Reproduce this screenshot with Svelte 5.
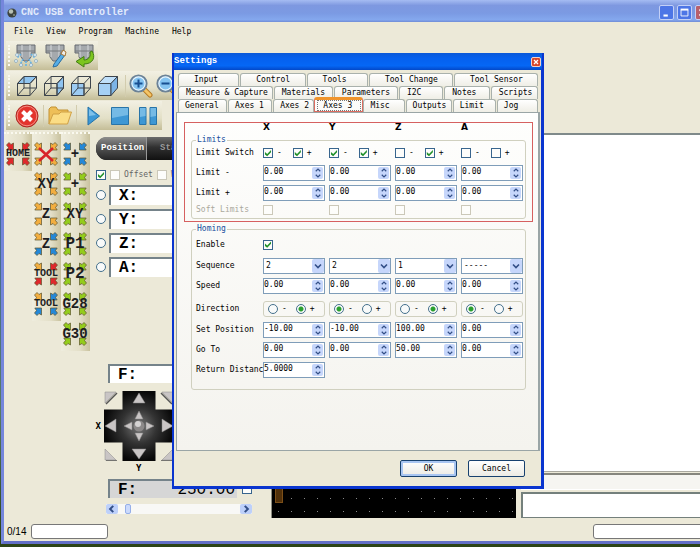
<script>
  const menus = ['File', 'View', 'Program', 'Machine', 'Help'];
  const tabRows = [
    { pad: 15, tabs: [['Input', 62], ['Control', 66], ['Tools', 62], ['Tool Change', 85], ['Tool Sensor', 85]] },
    { pad: 7, tabs: [['Measure & Capture', 96], ['Materials', 60], ['Parameters', 65], ['I2C', 45], ['Notes', 46], ['Scripts', 48]] },
    { pad: 6, tabs: [['General', 50], ['Axes 1', 45], ['Axes 2', 42], ['Axes 3', 48], ['Misc', 42], ['Outputs', 47], ['Limit', 44], ['Jog', 42]] }
  ];
  const axes = ['X', 'Y', 'Z', 'A'];
  const switches = [[true, true], [true, true], [false, true], [false, false]];
  const sequence = ['2', '2', '1', '-----'];
  const direction = ['+', '-', '+', '-'];
  const zeros = ['0.00', '0.00', '0.00', '0.00'];
  const setPosition = ['-10.00', '-10.00', '100.00', '0.00'];
  const goTo = ['0.00', '0.00', '50.00', '0.00'];

  const R = '#e0282c', O = '#f3ae3f', B = '#2488d8', G = '#93cc1c';
  const moves = [
    [{ t: 'HOME', s: 10, c: [R, R, R, R] }],
    [
      { t: '', cross: true, s: 10, c: [O, O, O, O] },
      { t: 'XY', s: 14, c: [O, O, O, O] },
      { t: 'Z', s: 14, c: [O, O, O, O] },
      { t: 'Z', s: 14, c: [O, B, B, B] },
      { t: 'TOOL', s: 10, c: [O, R, R, R] },
      { t: 'TOOL', s: 10, c: [O, B, B, B] }
    ],
    [
      { t: '+', s: 14, c: [B, B, B, B] },
      { t: '+', s: 14, c: [G, G, G, G] },
      { t: 'XY', s: 14, c: [G, G, G, G] },
      { t: 'P1', s: 16, c: [G, G, G, G] },
      { t: 'P2', s: 16, c: [G, G, G, G] },
      { t: 'G28', s: 14, c: [G, G, G, G] },
      { t: 'G30', s: 14, c: [G, G, G, G] }
    ]
  ];
  const corners = ['', 'translate(24 0) scale(-1 1)', 'translate(0 24) scale(1 -1)', 'translate(24 24) scale(-1 -1)'];
</script>

{#snippet spin(label, value)}
  <span class="spin">
    <input type="text" aria-label={label} {value} />
    <span class="arrows">
      <button aria-label="Increase"><svg viewBox="0 0 8 5"><path d="M1 4.200 4 1.300 7 4.200" /></svg></button>
      <button aria-label="Decrease"><svg viewBox="0 0 8 5"><path d="M1 .8 4 3.700 7 .8" /></svg></button>
    </span>
  </span>
{/snippet}

{#snippet spinRow(name, values)}
  <div class="row">
    <span class="name">{name}</span>
    {#each values as v, i}{@render spin(`${name} ${axes[i]}`, v)}{/each}
  </div>
{/snippet}

{#snippet cube(kind)}
  <button class="tool" aria-label="{kind} view">
    <svg width="20" height="20" viewBox="0 0 20 20" fill="none" stroke="#3d444c" stroke-width="1">
      {#if kind === 'Top'}<path d="M.5 7.5 7 .5H19.5L13 7.5Z" fill="#8fc4f0" />{/if}
      {#if kind === 'Side'}<path d="M13 7.5 19.5 .5V12L13 19.5Z" fill="#8fc4f0" />{/if}
      {#if kind === 'Front'}<path d="M.5 7.5H13V19.5H.5Z" fill="#9ccbf3" />{/if}
      {#if kind === 'Solid'}
        <path d="M.5 7.5H13V19.5H.5Z" fill="#a5d0f5" />
        <path d="M.5 7.5 7 .5H19.5L13 7.5Z" fill="#c0e0fa" />
        <path d="M13 7.5 19.5 .5V12L13 19.5Z" fill="#7cb4e6" />
      {:else}
        <path d="M.5 7.5H13V19.5H.5ZM7 .5H19.5V12H7ZM.5 7.5 7 .5M13 7.5 19.5 .5M.5 19.5 7 12M13 19.5 19.5 12" />
      {/if}
    </svg>
  </button>
{/snippet}

{#snippet lens(sign)}
  <button class="tool lens" aria-label="Zoom {sign}">
    <svg width="24" height="24" viewBox="0 0 24 24">
      <path d="m14.500 14.500 6.500 6.500" stroke="#b67a24" stroke-width="5" stroke-linecap="round" />
      <path d="m15 15 6 6" stroke="#f4c566" stroke-width="3" stroke-linecap="round" />
      <circle cx="9.500" cy="9.500" r="8" fill="#85c4f1" stroke="#6c8296" stroke-width="2.200" />
      <circle cx="9.500" cy="9.500" r="6.600" fill="none" stroke="#e6f4fd" stroke-width="1.200" />
      <path d={sign === 'in' ? 'M9.500 5.500v8M5.500 9.500h8' : 'M5.500 9.500h8'} stroke="#174f91" stroke-width="2" />
    </svg>
  </button>
{/snippet}

{#snippet spindle()}
  <path d="M3 1H21V9H17V13L14 17H10L7 13V9H3Z" fill="#a5a9ad" stroke="#666b70" />
  <path d="M8 1V13M16 1V13" stroke="#d7dadd" />
  <path d="M3 7H21" stroke="#74797d" />
{/snippet}

<div class="desktop">
  <main class="window">
    <header class="titlebar">
      <svg width="10" height="10" viewBox="0 0 10 10"><circle cx="5" cy="5" r="4.600" fill="#3d443f" /><circle cx="4" cy="3.500" r="2.200" fill="#b9c2b6" /><circle cx="7" cy="7" r="1" fill="#879084" /></svg>
      <h1>CNC USB Controller</h1>
      <button class="wbtn" aria-label="Minimize"><svg viewBox="0 0 15 15"><path d="M4 11H9" stroke="#fff" stroke-width="2.400" /></svg></button>
      <button class="wbtn" aria-label="Maximize"><svg viewBox="0 0 15 15"><path d="M3.500 4.500H11.500V11.500H3.500Z" fill="none" stroke="#fff" /><path d="M3 4H12" stroke="#fff" stroke-width="2" /></svg></button>
      <button class="wbtn close" aria-label="Close"><svg viewBox="0 0 15 15"><path d="M4 4 11 11M11 4 4 11" stroke="#fff" stroke-width="2" /></svg></button>
    </header>
    <nav class="menu">{#each menus as m}<button>{m}</button>{/each}</nav>

    <div class="toolbar">
      <button class="tool" aria-label="Mist">
        <svg width="24" height="24" viewBox="0 0 24 24">{@render spindle()}
          <path d="M7 10 3 14M17 10 21 14M9 15 6 21M15 15 18 21M12 17V23" stroke="#64b2e6" stroke-width="1.600" stroke-dasharray="2 1" />
          <g fill="#e4f3fc" stroke="#7297b1" stroke-width=".6"><circle cx="3" cy="11" r="1.500" /><circle cx="2" cy="17" r="1.500" /><circle cx="21" cy="11" r="1.500" /><circle cx="22" cy="17" r="1.500" /><circle cx="7" cy="21" r="1.500" /><circle cx="17" cy="21" r="1.500" /></g>
        </svg>
      </button>
      <button class="tool" aria-label="Probe">
        <svg width="24" height="24" viewBox="0 0 24 24">{@render spindle()}
          <path d="m11 20 8-11 3 2-8 11-4 1Z" fill="#55aee7" stroke="#2b6d9e" /><path d="m18 10 2-4 3 2-1 4Z" fill="#eee" stroke="#a7752f" />
        </svg>
      </button>
      <button class="tool" aria-label="Change tool">
        <svg width="24" height="24" viewBox="0 0 24 24">{@render spindle()}
          <path d="M20 7C24 13 21 20 12 20V23L4 17.500 12 12.500V16C17 16 19 12 18 8Z" fill="#7dc51f" stroke="#427c13" />
        </svg>
      </button>
    </div>
    <div class="toolbar cubes">
      {@render cube('Top')}{@render cube('Side')}{@render cube('Front')}{@render cube('Solid')}
      <i class="sep"></i>
      {@render lens('in')}{@render lens('out')}
    </div>
    <div class="toolbar run">
      <button class="tool" aria-label="Stop">
        <svg width="24" height="24" viewBox="0 0 24 24"><circle cx="12" cy="12" r="11" fill="#e3342d" stroke="#a92b25" /><circle cx="12" cy="12" r="9.800" fill="none" stroke="#f48d82" /><path d="m7.500 7.500 9 9m0-9-9 9" stroke="#fff" stroke-width="4" /></svg>
      </button>
      <i class="sep"></i>
      <button class="tool" aria-label="Open">
        <svg width="24" height="20" viewBox="0 0 24 20"><path d="M1 18V3L3 1H8L10 4H20V8" fill="#eebf58" stroke="#c39233" /><path d="M1 18 5 8 11 8 13 6H23.500L19.500 18Z" fill="#fbdd85" stroke="#d0a044" /></svg>
      </button>
      <i class="sep"></i>
      <button class="tool gap" aria-label="Start"><svg width="14" height="20" viewBox="0 0 14 20"><path d="M1 1 12.500 10 1 19Z" fill="#3c98d6" stroke="#2473a9" /><path d="M2 3 9 9 2 10Z" fill="#7fc1ea" /></svg></button>
      <button class="tool gap" aria-label="Halt"><svg width="18" height="18" viewBox="0 0 18 18"><path d="M.5 .5H17.500V17.500H.5Z" fill="#3d97d4" stroke="#2874a8" /><path d="M1 1H17V8L1 11Z" fill="#75bae5" /></svg></button>
      <button class="tool gap" aria-label="Pause"><svg width="18" height="18" viewBox="0 0 18 18"><path d="M.5 .5H7V17.500H.5ZM11 .5H17.500V17.500H11Z" fill="#3d97d4" stroke="#2874a8" /><path d="M1 1H6.500V9L1 10ZM11.500 1H17V9L11.500 10Z" fill="#75bae5" /></svg></button>
    </div>

    <div class="body">
      <div class="moves">
        {#each moves as col}
          <div class="movecol">
            {#each col as m}
              <button class="move" aria-label={m.t || 'Clear'}>
                <svg width="24" height="24" viewBox="0 0 24 24">
                  {#each m.c as fill, k}
                    <path d="M.5 3 3 .5 5 2.500 7.500 1V8H.8L2.500 5.500Z" {fill} stroke="#5d532c" stroke-width=".7" transform={corners[k]} />
                  {/each}
                  {#if m.cross}<path d="m5 6 14 13m0-13L5 19" stroke="#d8242a" stroke-width="2.600" />{/if}
                </svg>
                <span style="font-size:{m.s}px">{m.t}</span>
              </button>
            {/each}
          </div>
        {/each}
      </div>

      <section class="panel">
        <div class="pill"><button class="on">Position</button><button>Status</button></div>
        <div class="opts">
          <input type="checkbox" checked aria-label="Show position" />
          <label><input class="dim" type="checkbox" />Offset</label>
          <label><input class="dim" type="checkbox" />Work</label>
        </div>
        {#each ['X', 'Y', 'Z', 'A'] as a}
          <div class="axis"><input type="radio" name="axis" aria-label="Axis {a}" /><output>{a}:</output></div>
        {/each}
        <div class="lower">
          <output class="feed">F:</output>
          <div class="jog">
            <b>X</b>
            <svg width="70" height="70" viewBox="0 0 70 70">
              <defs><radialGradient id="pad"><stop offset="0" stop-color="#777" /><stop offset=".5" stop-color="#333" /><stop offset="1" stop-color="#080808" /></radialGradient></defs>
              <path d="M18.500 0H51.500V18.500H70V51.500H51.500V70H18.500V51.500H0V18.500H18.500Z" fill="url(#pad)" />
              <g fill="#c9c5c5" stroke="#8b8888" stroke-width=".5">
                <path d="M35 2 41 12H29ZM35 68 42 58H28ZM1 35 12 28V41ZM69 35 58 28V41Z" />
                <path d="M35 20 39 28H31ZM35 50 39 42H31ZM20 35 28 31V39ZM50 35 42 31V39Z" />
                <path d="M1 1H12L1 12ZM69 1H58L69 12ZM1 58V69H12ZM69 58V69H58Z" />
              </g>
              <path d="M2 13 13 2M57 2 68 13M2 70H13M57 70H69" stroke="#555" stroke-width="1.500" />
              <circle cx="35" cy="35" r="5.500" fill="#8c8989" /><circle cx="34" cy="33" r="3" fill="#d5d3d3" />
            </svg>
          </div>
          <b class="ylab">Y</b>
          <div class="rate"><output class="feed gray"><span>F:</span><span>250.00</span></output><input type="checkbox" aria-label="Override feed" /></div>
          <div class="slide">
            <button aria-label="Slower"><svg viewBox="0 0 8 8"><path d="M5 1.500 2.500 4 5 6.500" /></svg></button>
            <input type="range" min="0" max="100" value="4" aria-label="Feed rate" />
            <button aria-label="Faster"><svg viewBox="0 0 8 8"><path d="M3 1.500 5.500 4 3 6.500" /></svg></button>
          </div>
        </div>
      </section>

      <div class="canvas"><i></i></div>
      <section class="right"><div class="view"></div><div class="hbar"></div><div class="log"></div></section>
    </div>
    <footer class="status"><span>0/14</span><div class="box"></div><div class="box far"></div></footer>
  </main>

  <div class="dialog" role="dialog" aria-label="Settings">
    <header><h2>Settings</h2><button aria-label="Close settings"><svg viewBox="0 0 10 10"><path d="m2.500 2.500 5 5m0-5-5 5" stroke="#fff" stroke-width="1.600" /></svg></button></header>
    <div class="tabs" role="tablist">
      {#each tabRows as r}
        <div class="tabrow" style="grid-template-columns:{r.tabs.map(([, w]) => `minmax(0,${w}fr)`).join(' ')}">
          {#each r.tabs as [t]}
            <button role="tab" aria-selected={t === 'Axes 3'} class:sel={t === 'Axes 3'} style="padding-left:{r.pad}px"><span>{t}</span></button>
          {/each}
        </div>
      {/each}
    </div>
    <div class="page">
      <div class="marked">
        <div class="row heads"><span class="name"></span>{#each axes as a}<b>{a}</b>{/each}</div>
        <fieldset>
          <legend>Limits</legend>
          <div class="row">
            <span class="name">Limit Switch</span>
            {#each switches as [lo, hi]}
              <span class="pair"><label><input type="checkbox" checked={lo} />-</label><label><input type="checkbox" checked={hi} />+</label></span>
            {/each}
          </div>
          {@render spinRow('Limit -', zeros)}
          {@render spinRow('Limit +', zeros)}
          <div class="row soft">
            <span class="name">Soft Limits</span>
            {#each axes as a}<span class="pair"><input type="checkbox" disabled aria-label="Soft limits {a}" /></span>{/each}
          </div>
        </fieldset>
      </div>
      <fieldset class="homing">
        <legend>Homing</legend>
        <div class="row"><label class="name" for="enable">Enable</label><input id="enable" type="checkbox" checked /></div>
        <div class="row seq">
          <span class="name">Sequence</span>
          {#each sequence as s, i}
            <span class="drop"><select aria-label="Sequence {axes[i]}"><option>{s}</option></select><svg viewBox="0 0 11 14"><path d="M2.500 5.500 5.500 8.500 8.500 5.500" /></svg></span>
          {/each}
        </div>
        {@render spinRow('Speed', zeros)}
        <div class="row dir">
          <span class="name">Direction</span>
          {#each direction as d, i}
            <span class="radios"><label><input type="radio" name="dir{i}" checked={d === '-'} />-</label><label><input type="radio" name="dir{i}" checked={d === '+'} />+</label></span>
          {/each}
        </div>
        {@render spinRow('Set Position', setPosition)}
        {@render spinRow('Go To', goTo)}
        {@render spinRow('Return Distance', ['5.0000'])}
      </fieldset>
    </div>
    <div class="actions"><button class="ok">OK</button><button>Cancel</button></div>
  </div>
</div>

<style>
  :global(body) { margin: 0; }
  * { box-sizing: border-box; }
  .desktop { position: relative; min-height: 100vh; overflow: hidden; display: flex; padding: 0 0 3px 1px; background: linear-gradient(#5c7fc0, #3d66a8 30%, #587b62 75%, #2c4416 98%); font: 8px/10px "DejaVu Sans Mono", "Liberation Mono", monospace; color: #000; }
  button { font: inherit; color: inherit; border: 0; padding: 0; background: none; }
  input, select { font: inherit; color: inherit; margin: 0; }
  h1, h2 { margin: 0; }
  svg { display: block; flex: none; }

  .window { flex: none; width: calc(100% + 11px); display: flex; flex-direction: column; border-left: 3px solid #7586dc; border-bottom: 3px solid #626fc6; background: #ece9d8; }
  .titlebar { height: 22px; display: flex; align-items: center; gap: 3px; padding: 3px 1px 0 3px; background: linear-gradient(#a5bcf2, #7e98e0 25%, #7b9ae3 60%, #84a8ee 90%, #6f8bd6); }
  .titlebar h1 { flex: 1; padding-left: 1px; font: bold 10px/14px "Liberation Mono", monospace; color: #e2ebfc; }
  .wbtn { width: 15px; height: 15px; border: 1px solid #c3d0f7; border-radius: 2px; background: #4d76e6; }
  .close { background: #b8606c; }
  .menu { height: 19px; display: flex; align-items: center; gap: 13px; padding: 1px 0 0 10px; }
  .toolbar { height: 29px; margin: 0 0 1px 2px; width: 92px; display: flex; align-items: center; gap: 5px; padding-left: 8px; position: relative; background: linear-gradient(#f2f0e3, #e2dfc6 60%, #c4bd97); }
  .toolbar::before { content: ""; position: absolute; left: 2px; top: 4px; height: 21px; border-left: 2px dotted #fbfaf2; }
  .cubes { width: 260px; gap: 7px; padding-left: 11px; }
  .lens { margin-left: -4px; }
  .run { width: 156px; gap: 4px; padding-left: 9px; }
  .run .gap { margin-left: 6px; }
  .sep { width: 1px; height: 22px; background: #faf9ef; border-left: 1px solid #d2ccae; }

  .body { flex: 1; display: flex; }
  .moves { display: flex; align-items: flex-start; padding-top: 1px; }
  .movecol { width: 29px; padding: 7px 0 0; border-top: 2px dotted #faf9ef; background: linear-gradient(90deg, #efedde, #e3dfc8 65%, #c9c29e); }
  .movecol:first-child { width: 28px; }
  .move { display: grid; place-items: center; width: 28px; height: 30px; padding-bottom: 4px; }
  .move svg, .move span { grid-area: 1 / 1; }
  .move span { font-family: "Liberation Mono", monospace; font-weight: bold; line-height: 16px; color: #1d1d22; }

  .panel { width: 181px; display: flex; flex-direction: column; padding: 6px 15px 5px 6px; }
  .pill { display: flex; flex: none; height: 23px; overflow: hidden; border-radius: 11px; background: linear-gradient(#6b6b6b, #303030 45%, #111); color: #999; font: bold 9px/21px "Liberation Mono", monospace; }
  .pill button { flex: 1; text-align: left; padding-left: 13px; }
  .pill .on { flex: none; width: 51px; padding-left: 5px; color: #fff; background: linear-gradient(#8e8e8e, #555 45%, #262626); border-right: 1px solid #999; }
  .opts { display: flex; align-items: center; gap: 4px; height: 12px; margin: 9px 0 4px; color: #666; }
  label { display: flex; align-items: center; gap: 4px; }
  input[type="checkbox"] { appearance: none; flex: none; width: 10px; height: 10px; border: 1px solid #38658e; background: #fdfdfb; }
  input[type="checkbox"]:checked::before { content: ""; display: block; width: 8px; height: 8px; background: #21912a; clip-path: polygon(12% 38%, 40% 62%, 88% 12%, 88% 42%, 40% 92%, 12% 68%); }
  input.dim, input[type="checkbox"]:disabled { border-color: #cbc8b9; }
  .axis { display: flex; align-items: center; gap: 3px; margin-bottom: 4px; }
  input[type="radio"] { appearance: none; flex: none; width: 10px; height: 10px; border: 1px solid #44708c; border-radius: 50%; background: #f8fafa; }
  input[type="radio"]:checked { background: radial-gradient(#2aa02e 0 2px, #f8fafa 3px); }
  output { flex: 1; height: 20px; padding: 0 8px; border: solid #75838a; border-width: 2px 0 0 2px; background: #fff; font: bold 16px/19px "Liberation Mono", monospace; overflow: hidden; }
  .lower { margin-top: auto; display: flex; flex-direction: column; }
  .feed { flex: none; display: block; margin-left: 12px; height: 19px; }
  .jog { display: flex; align-items: center; gap: 3px; margin-top: 8px; width: 78px; }
  .jog b, .ylab { font: bold 9px/10px "DejaVu Sans Mono", monospace; margin-left: -3px; }
  .jog b { width: 8px; text-align: right; }
  .ylab { margin: 2px 0 6px 40px; }
  .rate { display: flex; align-items: center; gap: 5px; margin-right: 4px; }
  .gray { flex: 1; display: flex; justify-content: space-between; padding-right: 2px; background: #d6d6d6; font-weight: normal; }
  .gray span:first-child { font-weight: bold; }
  .slide { display: flex; gap: 3px; height: 10px; margin: 6px 0 0 10px; width: 146px; background: #f8f8f6; }
  .slide button { width: 12px; border-radius: 2px; background: #bdd0fa; }
  .slide svg, .arrows svg, .drop svg { fill: none; stroke: #334f87; stroke-width: 1.600; }
  .slide svg { height: 10px; margin: auto; }
  .slide input { appearance: none; flex: 1; min-width: 0; height: 10px; background: none; }
  .slide input::-webkit-slider-thumb { appearance: none; width: 6px; height: 10px; border: 1px solid #95afe8; border-radius: 2px; background: #cbdafc; }

  .canvas { flex: none; width: 245px; margin: 2px 5px 1px 0; border-left: 1px solid #8c8c80; display: flex; align-items: flex-end; background: radial-gradient(circle, #888 0 .5px, transparent 1px) 0 100% / 13px 13px #000; }
  .canvas i { width: 8px; height: 30px; margin: 0 0 15px 3px; background: #50300a; border: 1px solid #7c4f18; }
  .right { flex: 1; display: flex; flex-direction: column; padding: 2px 0 1px; }
  .view { flex: 1; background: #fff; border-top: 2px solid #7f8a8a; border-bottom: 1px solid #aaa9a0; }
  .hbar { height: 17px; margin: 1px 0 2px; border-top: 2px solid #86867e; border-bottom: 1px solid #fff; background: #f6f5f1; }
  .log { height: 26px; border: solid #74807c; border-width: 2px 0 1px 2px; background: #fff; }
  .status { height: 22px; display: flex; align-items: center; gap: 5px; padding: 3px 8px 0 3px; font: 10px/12px "Liberation Sans", sans-serif; }
  .box { width: 77px; height: 15px; border: 1px solid #777; border-radius: 3px; background: #fff; }
  .far { width: 110px; margin-left: auto; }

  .dialog { position: absolute; left: 172px; top: 53px; width: 372px; border: solid #0a35cf; border-width: 0 3px 3px 2px; background: #ece9d8; }
  .dialog header { display: flex; align-items: center; justify-content: space-between; height: 17px; padding: 0 1px 0 0; margin: 0 -1px 3px 0; background: linear-gradient(#0a58d8, #0560ee 30%, #0567f5 75%, #0348c8); }
  .dialog h2 { font: bold 9px/17px "Liberation Mono", monospace; color: #fff; }
  .dialog header button { width: 10px; height: 10px; border: 1px solid #f4d1c8; border-radius: 2px; background: #d7472b; }
  .tabs { padding: 0 3px 0 4px; }
  .tabrow { display: grid; gap: 1px; height: 13px; }
  .tabrow button { text-align: left; white-space: nowrap; border: 1px solid #a9b1ac; border-bottom: 0; border-radius: 3px 3px 0 0; background: linear-gradient(#fff, #efeee6); line-height: 12px; }
  .tabrow .sel { position: relative; margin: -2px -1px 0; border: 1px solid #dc6c60; border-top: 3px solid #f0942c; background: #fcfcfa; line-height: 9px; padding-left: 1px !important; }
  .sel span { display: block; margin: 0 1px; border: 1px dotted #777; padding-left: 5px; }
  .page { margin: 0 1px 0 2px; padding: 9px 5px 60px 7px; border: 1px solid #9aa5a6; border-right-width: 2px; background: linear-gradient(#fefefd, #f4f3ee); }
  .marked { border: 1px solid #d66060; padding: 0 6px 2px; margin-bottom: 2px; }
  fieldset { margin: 0; min-width: 0; padding: 2px 4px 3px; border: 1px solid #d0d0bf; border-radius: 3px; }
  legend { padding: 0 1px; line-height: 10px; color: #164d9c; }
  .row { display: grid; grid-template-columns: 67px repeat(4, 66px); align-items: center; height: 16px; margin-bottom: 4px; }
  .name { white-space: nowrap; }
  .heads { height: 8px; padding-left: 5px; margin-bottom: 4px; }
  .heads b { font: bold 9px/8px "DejaVu Sans", sans-serif; }
  .marked fieldset .row:nth-of-type(1) { margin-bottom: 2px; height: 15px; padding-bottom: 1px; margin-top: -1px; margin-bottom: 4px; }
  .pair { display: flex; gap: 11px; }
  .soft { height: 10px; margin: 0; color: #aaa89c; }
  .spin, .drop { display: flex; width: 62px; height: 16px; border: 1px solid #7f9db9; background: #fff; position: relative; z-index: 1; }
  .spin input { width: 0; flex: 1; min-width: 0; border: 0; padding: 0 0 2px; background: none; outline: 0; }
  .arrows { width: 11px; margin: 1px; display: flex; flex-direction: column; background: #c6d6fb; border-radius: 2px; }
  .arrows button { flex: 1; display: grid; place-items: center; }
  .arrows svg { width: 6px; height: 4px; }
  .drop select { appearance: none; width: 100%; border: 0; padding: 0 0 0 2px; background: none; }
  .drop svg { position: absolute; right: 0; top: 0; width: 12px; height: 14px; background: #c6d6fb; border-radius: 2px; pointer-events: none; }
  .homing { padding: 3px 4px 7px 4px; margin: 0 7px; }
  .homing .row:nth-of-type(1) { margin-bottom: 6px; height: 15px; }
  .row.dir { margin: 7px 0 5px; }
  .radios { display: flex; gap: 9px; width: 62px; height: 16px; padding-left: 4px; border: 1px solid #d0d0bf; border-radius: 3px; }
  .actions { display: flex; justify-content: flex-end; gap: 11px; padding: 9px 16px 9px; }
  .actions button { width: 57px; height: 17px; border: 1px solid #17416f; border-radius: 2px; background: linear-gradient(#fff, #ecebe4); }
  .actions .ok { box-shadow: inset 0 0 0 2px #a9c6f2; }
</style>
